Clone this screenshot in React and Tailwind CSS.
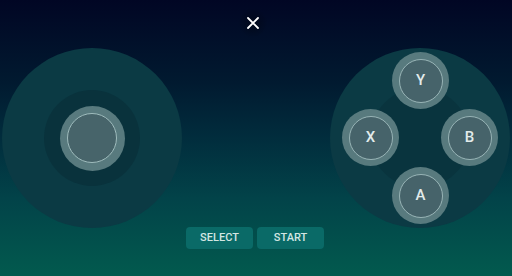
import React from "react";

function FaceButton({ label, className }) {
  return (
    <div
      className={`absolute w-[57px] h-[57px] rounded-full bg-[#587a7e] flex items-center justify-center ${className}`}
    >
      <div className="w-[44px] h-[44px] rounded-full bg-[#46636a] border border-[#98b4b6] flex items-center justify-center text-[15px] font-medium text-[#e2ebeb]">
        {label}
      </div>
    </div>
  );
}

export default function App() {
  return (
    <div
      className="w-[512px] h-[276px] overflow-hidden flex items-center px-[2px] bg-[linear-gradient(180deg,#010624_0%,#011a30_30%,#012d3d_50%,#024349_72%,#025a4e_100%)]"
      style={{ fontFamily: "Roboto, 'Noto Sans', sans-serif" }}
    >
      {/* Left joystick */}
      <div className="w-[180px] h-[180px] shrink-0 rounded-full bg-[#0b3a44] flex items-center justify-center">
        <div className="w-[96px] h-[96px] rounded-full bg-[#09323c] flex items-center justify-center">
          <div className="w-[65px] h-[65px] rounded-full bg-[#587a7e] flex items-center justify-center">
            <div className="w-[50px] h-[50px] rounded-full bg-[#47646a] border border-[#9fbcbd]" />
          </div>
        </div>
      </div>

      {/* Middle column */}
      <div className="flex-1 self-stretch flex flex-col items-center justify-between pt-[8px] pb-[27px] pr-[2px]">
        <div className="w-[30px] h-[30px] rounded-full bg-[radial-gradient(circle,rgba(0,0,0,0.35)_0%,rgba(0,0,0,0)_70%)] flex items-center justify-center mr-[4px]">
          <svg width="12" height="12" viewBox="0 0 12 12" fill="none">
            <path d="M1 1L11 11M11 1L1 11" stroke="#ffffff" strokeWidth="1.8" strokeLinecap="round" />
          </svg>
        </div>
        <div className="flex gap-[4px]">
          <div className="w-[67px] h-[22px] rounded-[4px] bg-[#0a6a67] flex items-center justify-center text-[11px] font-medium text-[#d2e6e3]">
            SELECT
          </div>
          <div className="w-[67px] h-[22px] rounded-[4px] bg-[#0a6a67] flex items-center justify-center text-[11px] font-medium text-[#d2e6e3]">
            START
          </div>
        </div>
      </div>

      {/* Right face buttons */}
      <div className="relative w-[180px] h-[180px] shrink-0 rounded-full bg-[#0b3a44] flex items-center justify-center">
        <div className="w-[100px] h-[100px] rounded-full bg-[#09343e]" />
        <FaceButton label="Y" className="left-[62px] top-[4px]" />
        <FaceButton label="X" className="left-[12px] top-[61px]" />
        <FaceButton label="B" className="left-[111px] top-[61px]" />
        <FaceButton label="A" className="left-[62px] top-[119px]" />
      </div>
    </div>
  );
}
